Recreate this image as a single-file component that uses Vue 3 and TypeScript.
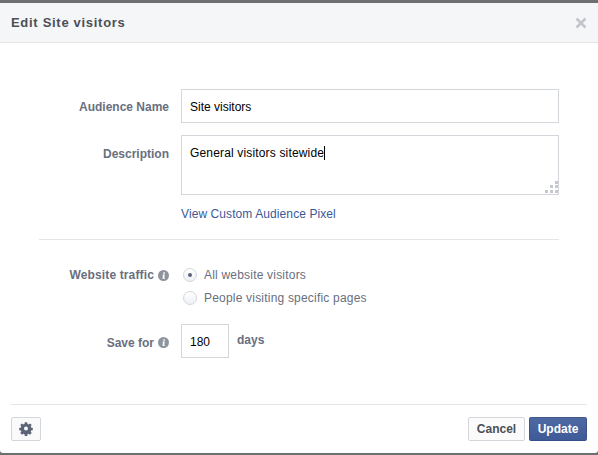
<script setup lang="ts">
const title = 'Edit Site visitors'
</script>

<template>
  <div class="page">
    <div class="dialog">
      <header class="head">
        <h1 class="title">{{ title }}</h1>
        <svg class="close" width="12" height="12" viewBox="0 0 12 12"><path d="M1.5 1.5l9 9M10.5 1.5l-9 9" stroke="#c2c5cb" stroke-width="2.6" fill="none"/></svg>
      </header>
      <main class="body">
        <div class="row name-row">
          <div class="label name-label">Audience Name</div>
          <div class="field name-field"><span class="value">Site visitors</span></div>
        </div>
        <div class="row desc-row">
          <div class="label desc-label">Description</div>
          <div class="field desc-field">
            <span class="value desc-value">General visitors sitewide</span><span class="caret"></span>
            <svg class="grip" width="13" height="12" viewBox="0 0 13 12" fill="#c6c8cc">
              <rect x="10" y="0" width="3" height="3"/><rect x="5" y="4" width="3" height="3"/><rect x="10" y="4" width="3" height="3"/>
              <rect x="0" y="9" width="3" height="3"/><rect x="5" y="9" width="3" height="3"/><rect x="10" y="9" width="3" height="3"/>
            </svg>
          </div>
        </div>
        <a class="pixel-link">View Custom Audience Pixel</a>
        <div class="divider"></div>
        <div class="row traffic-row">
          <div class="label with-info"><span class="traffic-text">Website traffic</span> <svg class="info" width="11" height="11" viewBox="0 0 11 11"><circle cx="5.5" cy="5.5" r="5.5" fill="#8d949e"/><path d="M4.6 4.6h2.2l-.5 3.4h.7v.8H4.4l.6-3.5h-.6zM5.3 2.2h1.6v1.6H5.3z" fill="#fff"/></svg></div>
          <div class="radios">
            <div class="radio-line"><span class="radio on"></span><span class="radio-text">All website visitors</span></div>
            <div class="radio-line"><span class="radio"></span><span class="radio-text">People visiting specific pages</span></div>
          </div>
        </div>
        <div class="row save-row">
          <div class="label with-info save-label">Save for <svg class="info" width="11" height="11" viewBox="0 0 11 11"><circle cx="5.5" cy="5.5" r="5.5" fill="#8d949e"/><path d="M4.6 4.6h2.2l-.5 3.4h.7v.8H4.4l.6-3.5h-.6zM5.3 2.2h1.6v1.6H5.3z" fill="#fff"/></svg></div>
          <div class="field days-field"><span class="value">180</span></div>
          <span class="days">days</span>
        </div>
      </main>
      <footer class="foot">
        <button class="btn gear-btn" type="button">
          <svg width="14" height="14" viewBox="0 0 14 14" fill="#5c6578"><path fill-rule="evenodd" d="M5.8 1h2.4l.3 1.7 1 .4L11 2.1l1.7 1.7-1 1.5.4 1 1.7.3v2.4l-1.7.3-.4 1 1 1.5-1.7 1.7-1.5-1-1 .4-.3 1.7H5.8l-.3-1.7-1-.4-1.5 1-1.7-1.7 1-1.5-.4-1-1.7-.3V6.6l1.7-.3.4-1-1-1.5L3 2.1l1.5 1 1-.4zM7 5.2a2 2 0 1 0 0 4 2 2 0 0 0 0-4z" transform="translate(0 -.7)"/></svg>
        </button>
        <div class="actions">
          <button class="btn cancel" type="button">Cancel</button>
          <button class="btn update" type="button">Update</button>
        </div>
      </footer>
    </div>
  </div>
</template>

<style>
html, body { margin: 0; background: #fff; }
</style>

<style scoped>
.page {
  width: 598px;
  height: 455px;
  overflow: hidden;
  font-family: "Liberation Sans", Arial, sans-serif;
  font-size: 12px;
  background: #6f6f6f;
  display: flex;
  flex-direction: column;
  padding: 3px 0 2px;
  box-sizing: border-box;
}
.dialog { flex: 1; background: #fff; display: flex; flex-direction: column; border-radius: 0 0 3px 3px; }
.head {
  height: 39px;
  background: #f5f6f7;
  border-bottom: 1px solid #e5e5e5;
  display: flex;
  align-items: center;
  justify-content: space-between;
  padding: 0 12px 0 11px;
  flex: none;
  box-sizing: content-box;
}
.title { margin: 0; font-size: 13px; font-weight: bold; color: #4b4f56; letter-spacing: .7px; }
.close { display: block; margin-right: -1px; }
.body { flex: 1; padding-top: 46px; display: flex; flex-direction: column; }
.row { display: flex; }
.label {
  width: 169px;
  margin-right: 12px;
  text-align: right;
  font-weight: bold;
  color: #696f7e;
  flex: none;
  box-sizing: border-box;
}
.name-label { padding-top: 1px; }
.field { border: 1px solid #d3d6db; box-sizing: border-box; color: #000; padding: 0 8px; }
.name-row { align-items: center; height: 34px; }
.name-field { width: 378px; height: 34px; line-height: 34px; }
.desc-row { margin-top: 12px; }
.desc-label { padding-top: 12px; }
.desc-field { width: 378px; height: 60px; position: relative; padding-top: 10px; line-height: 14px; display: block; }
.desc-value { letter-spacing: .16px; }
.caret { display: inline-block; width: 1px; height: 14px; background: #000; vertical-align: top; }
.grip { position: absolute; right: 0; bottom: 1px; }
.pixel-link { margin: 12px 0 0 181px; line-height: 14px; color: #3b5998; letter-spacing: .09px; }
.divider { height: 1px; background: #e5e5e5; margin: 18px 39px 0; }
.traffic-row { margin-top: 28px; }
.traffic-text { letter-spacing: .14px; }
.with-info { display: flex; justify-content: flex-end; align-items: center; gap: 4px; height: 14px; }
.radios { display: flex; flex-direction: column; gap: 9px; margin-top: 0; }
.radio-line { display: flex; align-items: center; height: 14px; }
.radio {
  width: 14px; height: 14px; border-radius: 50%;
  border: 1px solid #d3d6db;
  background: linear-gradient(#fff, #eef0f3);
  box-sizing: border-box;
  margin-left: 2px;
  margin-right: 7px;
  position: relative;
  flex: none;
}
.radio.on::after {
  content: ""; position: absolute; left: 4px; top: 4px; width: 4px; height: 4px; border-radius: 50%; background: #5b6477;
}
.radio-text { color: #696f7e; letter-spacing: .2px; }
.save-row { margin-top: 19px; align-items: center; height: 34px; }
.save-label { padding-top: 3px; }
.days-field { width: 48px; height: 34px; line-height: 34px; }
.days { font-weight: bold; color: #696f7e; margin-left: 8px; margin-top: -2px; }
.foot {
  margin: 0 11px;
  height: 49px;
  flex: none;
  border-top: 1px solid #e5e5e5;
  display: flex;
  justify-content: space-between;
  align-items: flex-start;
  padding-top: 12px;
  box-sizing: border-box;
}
.actions { display: flex; gap: 4px; }
.btn {
  height: 24px;
  font: bold 12px "Liberation Sans", Arial, sans-serif;
  border-radius: 2px;
  border: 1px solid #d3d6db;
  background: #fafafa;
  color: #4b4f56;
  padding: 0;
  display: flex;
  align-items: center;
  justify-content: center;
  box-sizing: border-box;
}
.gear-btn { width: 30px; }
.cancel { width: 57px; background: #fbfbfb; }
.update { width: 58px; background: linear-gradient(#4e69a2, #3f5b98); border-color: #435a8b #3c5488 #334f8c; color: #fff; }
</style>
